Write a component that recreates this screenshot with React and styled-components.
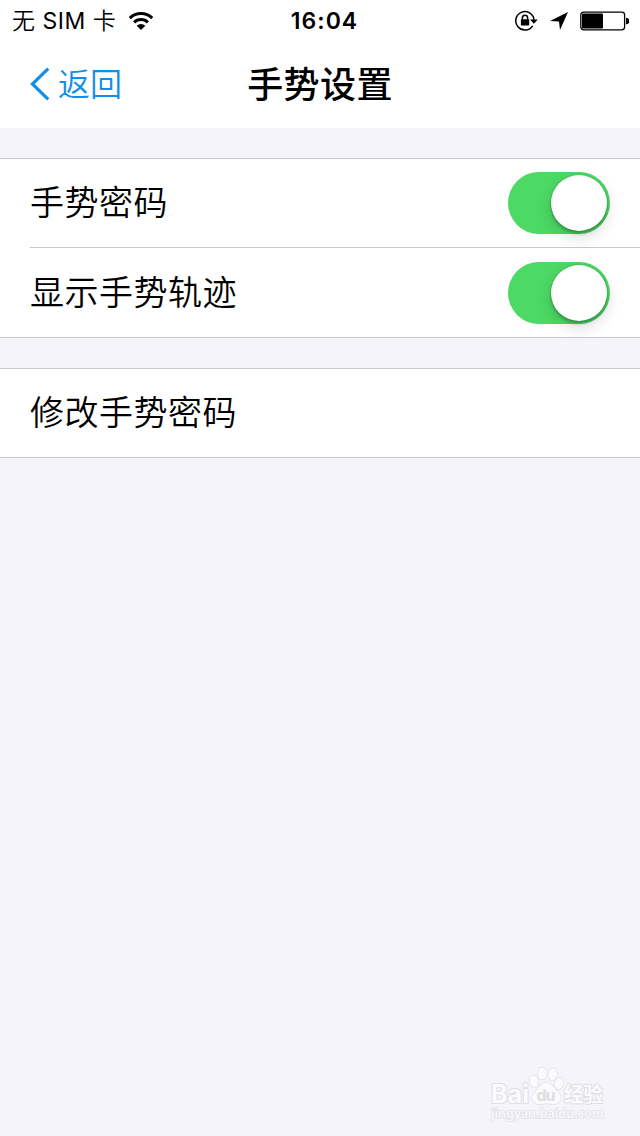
import React, { useState } from 'react'
import styled, { createGlobalStyle } from 'styled-components'

const GlobalStyle = createGlobalStyle`
*{
    box-sizing:border-box;
}
body{
    margin:0;
    background:#f4f4fa;
    color:#000;
    font-family:Inter, "Noto Sans CJK SC", sans-serif;
}
svg{
    display:block;
}
`
const Screen = styled.div`
position:relative;
display:flex;
flex-direction:column;
width:640px;
height:1136px;
overflow:hidden;
background:#f4f4fa;
`
const StatusBar = styled.div`
display:grid;
grid-template-columns:1fr auto 1fr;
align-items:center;
height:40px;
padding:1px 11px 0 12px;
background:#fff;
font-size:24px;
line-height:39px;
`
const Carrier = styled.div`
display:flex;
align-items:center;
gap:12px;
white-space:pre;
`
const CarrierName = styled.span`
padding-top:2px;
font-size:23px;
font-weight:350;
line-height:37px;
letter-spacing:0.5px;

b{
    font-weight:400;
}
`
const Time = styled.div`
padding:2px 0 0 8px;
font-size:23px;
font-weight:600;
line-height:37px;
letter-spacing:1px;
`
const Indicators = styled.div`
display:flex;
align-items:center;
justify-content:flex-end;
gap:12px;
`
const NavBar = styled.div`
display:grid;
grid-template-columns:1fr auto 1fr;
align-items:center;
height:88px;
padding:0 30px;
background:#fff;
`
const BackButton = styled.button`
display:flex;
align-items:center;
gap:8px;
padding:0;
border:none;
background:transparent;
color:#118eea;
font-family:inherit;
font-size:32px;
font-weight:350;
line-height:48px;

span{
    padding-top:2px;
}
`
const Title = styled.h1`
margin:0;
padding-top:2px;
font-size:36px;
font-weight:500;
line-height:52px;
letter-spacing:0.4px;
`
const Group = styled.div`
margin-top:30px;
padding-left:30px;
border-top:1px solid #c8c7cc;
border-bottom:1px solid #c8c7cc;
background:#fff;
`
const Row = styled.div`
display:flex;
align-items:center;
justify-content:space-between;
height:${(props) => props.$height || 88}px;
padding-right:30px;

& + &{
    box-sizing:content-box;
    border-top:1px solid #c8c7cc;
}
`
const Label = styled.span`
font-size:34px;
font-weight:350;
line-height:50px;
letter-spacing:0.5px;
`
const Track = styled.button`
display:flex;
justify-content:${(props) => (props.$on ? 'flex-end' : 'flex-start')};
width:102px;
height:62px;
padding:3px;
border:none;
border-radius:31px;
background:${(props) => (props.$on ? '#4cd964' : '#e5e5e5')};
`
const Knob = styled.span`
width:56px;
height:56px;
border-radius:50%;
background:#fff;
box-shadow:0 6px 16px rgba(0,0,0,0.15), 0 3px 3px rgba(0,0,0,0.2), 0 0 2px rgba(0,0,0,0.25);
`
const Watermark = styled.div`
position:absolute;
left:488px;
bottom:10px;
`

const WifiIcon = () => (
    <svg width="26" height="20" viewBox="0 0 26 20">
        <g fill="none" stroke="#000" strokeWidth="3">
            <path d="M1.8 7.1A16 16 0 0 1 24.2 7.1" />
            <path d="M6.1 11.3A10 10 0 0 1 19.9 11.3" />
        </g>
        <path d="M13 19L8.7 14.8A6.2 6.2 0 0 1 17.3 14.8Z" />
    </svg>
)

const RotationLockIcon = () => (
    <svg width="24" height="22" viewBox="0 0 24 22">
        <path d="M18.7 15.8A9.2 9.2 0 1 1 20.1 9.8" fill="none" stroke="#000" strokeWidth="1.5" />
        <path d="M16 9.5H23.8L19.9 13.7Z" />
        <rect x="6.9" y="9.2" width="8.3" height="6.2" rx="0.6" />
        <path d="M8.4 10V7.9A2.6 2.6 0 0 1 13.6 7.9V10" fill="none" stroke="#000" strokeWidth="1.5" />
    </svg>
)

const LocationIcon = () => (
    <svg width="18" height="18" viewBox="0 0 18 18">
        <path d="M18 0L10 18L9 9.6L0 9Z" />
    </svg>
)

const BatteryIcon = () => (
    <svg width="49" height="20" viewBox="0 0 49 20">
        <rect x="0.8" y="1.2" width="43.8" height="17.6" rx="2.8" fill="none" stroke="#000" strokeWidth="1.3" />
        <rect x="2" y="2.5" width="21" height="15" rx="1" />
        <path d="M46 6.7A3.3 3.3 0 0 1 46 13.3Z" />
    </svg>
)

const BackIcon = () => (
    <svg width="20" height="34" viewBox="0 0 20 34">
        <path d="M18.2 1.6L2.4 17L18.2 32.4" fill="none" stroke="#118eea" strokeWidth="3.2" />
    </svg>
)

const BaiduMark = () => (
    <svg width="122" height="64" viewBox="0 0 122 64">
        <g
            fill="#fbfbfd"
            stroke="#e0e0e4"
            strokeWidth="2"
            paintOrder="stroke"
            strokeLinejoin="round"
            fontFamily="Inter, 'Noto Sans CJK SC', sans-serif"
            fontWeight="700"
        >
            <text x="3" y="40.500" fontSize="25" textLength="38" lengthAdjust="spacingAndGlyphs">Bai</text>
            <text x="76" y="40" fontSize="20" textLength="39" lengthAdjust="spacingAndGlyphs">经验</text>
            <g strokeWidth="1.4">
                <ellipse cx="46" cy="19.5" rx="4.2" ry="6" transform="rotate(-10 46 19.5)" />
                <ellipse cx="54.3" cy="11.5" rx="4.3" ry="6" />
                <ellipse cx="64.7" cy="12.2" rx="4.3" ry="6" transform="rotate(10 64.7 12.2)" />
                <ellipse cx="71" cy="21.5" rx="4.2" ry="5.8" transform="rotate(10 71 21.5)" />
                <path d="M58.5 20.5C64 20.5 65.5 26 69 29C73 32.5 74 36 71.5 39.5C68 44 63 41.5 58.5 41.5C54 41.5 49 44 45.5 39.5C43 36 44 32.5 48 29C51.5 26 53 20.5 58.5 20.5Z" />
            </g>
            <text x="48.5" y="38.5" fontSize="16" fill="#dedee3" stroke="none" textLength="19">du</text>
            <text
                x="3"
                y="55.500"
                fontSize="13"
                fontWeight="500"
                strokeWidth="1.6"
                textLength="113"
                lengthAdjust="spacingAndGlyphs"
                fontFamily="'Noto Sans', sans-serif"
            >
                jingyan.baidu.com
            </text>
        </g>
    </svg>
)

const Switch = ({ label }) => {
    const [on, setOn] = useState(true)
    return (
        <Track role="switch" aria-label={label} aria-checked={on} $on={on} onClick={() => setOn(!on)}>
            <Knob />
        </Track>
    )
}

const App = () => {
    return (
        <Screen>
            <GlobalStyle />
            <StatusBar>
                <Carrier>
                    <CarrierName>无 <b>SIM</b> 卡</CarrierName>
                    <WifiIcon />
                </Carrier>
                <Time>16:04</Time>
                <Indicators>
                    <RotationLockIcon />
                    <LocationIcon />
                    <BatteryIcon />
                </Indicators>
            </StatusBar>
            <NavBar>
                <BackButton>
                    <BackIcon />
                    <span>返回</span>
                </BackButton>
                <Title>手势设置</Title>
            </NavBar>
            <Group>
                <Row>
                    <Label>手势密码</Label>
                    <Switch label="手势密码" />
                </Row>
                <Row $height={89}>
                    <Label>显示手势轨迹</Label>
                    <Switch label="显示手势轨迹" />
                </Row>
            </Group>
            <Group>
                <Row>
                    <Label>修改手势密码</Label>
                </Row>
            </Group>
            <Watermark>
                <BaiduMark />
            </Watermark>
        </Screen>
    )
}

export default App
